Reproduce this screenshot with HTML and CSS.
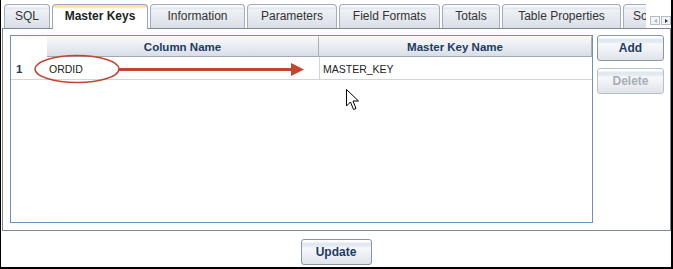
FILE: index.html
```html
<!DOCTYPE html>
<html lang="en">
<head>
  <meta charset="UTF-8" />
  <title>Master Keys</title>
  <link rel="stylesheet" href="styles.css">
</head>
<body>
  <div class="frame">
    <div class="tabbar">
      <div class="tabs">
        <div class="tab tab-sql">SQL</div>
        <div class="tab tab-keys active">Master Keys</div>
        <div class="tab tab-info">Information</div>
        <div class="tab tab-params">Parameters</div>
        <div class="tab tab-formats">Field Formats</div>
        <div class="tab tab-totals">Totals</div>
        <div class="tab tab-props">Table Properties</div>
        <div class="tab tab-more">Sort</div>
      </div>
      <div class="scroller">
        <span class="scroll-btn prev off"></span>
        <span class="scroll-btn next"></span>
      </div>
    </div>

    <div class="panel">
      <div class="grid">
        <div class="grid-head">
          <div class="cell num"></div>
          <div class="cell hd">Column Name</div>
          <div class="cell hd">Master Key Name</div>
        </div>
        <div class="grid-row">
          <div class="cell num">1</div>
          <div class="cell">ORDID</div>
          <div class="cell sep">MASTER_KEY</div>
        </div>
      </div>
      <div class="side">
        <button class="btn">Add</button>
        <button class="btn" disabled>Delete</button>
      </div>
    </div>

    <div class="footer">
      <button class="btn btn-update">Update</button>
    </div>

    <!-- annotation drawn over the grid -->
    <svg class="mark" width="673" height="120" viewBox="0 0 673 120">
      <ellipse cx="77" cy="69" rx="42" ry="13.5" fill="none" stroke="#c0462f" stroke-width="1.6" />
      <line x1="119" y1="69.5" x2="294" y2="69.5" stroke="#c0462f" stroke-width="3" />
      <polygon points="291,63 304,69.5 291,76" fill="#c0462f" />
    </svg>

    <svg class="cursor" width="14" height="22" viewBox="0 0 14 22">
      <path d="M0.5 0.5 L0.5 17 L4.5 13 L7.5 20.5 L10 19.5 L7 12 L12.5 12 Z" fill="#fff" stroke="#000" stroke-width="1" stroke-linejoin="miter" />
    </svg>
  </div>
</body>
</html>
```

FILE: styles.css
```css
body { margin: 0; background: #fff; font-family: "Liberation Sans", Arial, sans-serif; }

.frame { position: relative; width: 673px; height: 269px; box-sizing: border-box; border-left: 1px solid #000; border-right: 2px solid #000; border-bottom: 2px solid #000; padding-top: 4px; }

.tabbar { display: flex; align-items: flex-start; height: 25px; padding-left: 3px; }
.tabs { display: flex; align-items: flex-start; gap: 2px; width: 642px; height: 25px; overflow: hidden; }
.tab { flex: none; box-sizing: border-box; height: 24px; line-height: 23px; text-align: center; font-size: 12px; color: #333; border: 1px solid #a3adbb; border-bottom: none; border-radius: 4px 4px 0 0; background: linear-gradient(#f7f8fb 0, #f7f8fb 2px, #dde5ef 3px, #eef1f5 5px, #e4e8ee 60%, #d9dee6 100%); white-space: nowrap; overflow: hidden; }
.tab.active { position: relative; z-index: 2; height: 25px; font-weight: bold; color: #222; background: linear-gradient(#fbe3a0 0, #fbe3a0 2px, #fff 4px, #fff 100%); border-color: #9aa5b5; }
.tab-sql { width: 46px; }
.tab-keys { width: 96px; }
.tab-info { width: 95px; }
.tab-params { width: 90px; }
.tab-formats { width: 101px; }
.tab-totals { width: 58px; }
.tab-props { width: 119px; }
.tab-more { width: 40px; text-align: left; padding-left: 9px; }

.scroller { display: flex; gap: 1px; margin-top: 12px; margin-left: 4px; }
.scroll-btn { position: relative; box-sizing: border-box; width: 10px; height: 9px; border: 1px solid #b4bcc8; background: #f2f4f7; }
.scroll-btn::after { content: ""; position: absolute; top: 1.5px; border-top: 2.5px solid transparent; border-bottom: 2.5px solid transparent; }
.scroll-btn.prev::after { left: 2.5px; border-right: 3px solid #a8afba; }
.scroll-btn.next::after { left: 3px; border-left: 3px solid #333; }

.panel { position: relative; z-index: 1; display: flex; gap: 4px; margin: -1px 0 0 1px; width: 669px; height: 203px; box-sizing: border-box; border: 1px solid #7e8893; padding: 6px 0 0 7px; }

.grid { width: 583px; height: 188px; box-sizing: border-box; border: 1px solid #6f8fbf; font-size: 10.5px; color: #222; }
.grid-head, .grid-row { display: grid; grid-template-columns: 36px 272px 1fr; }
.grid-head { height: 21px; }
.grid-row { height: 22px; border-bottom: 1px solid #d2d5da; }
.cell { display: flex; align-items: center; padding-left: 2px; padding-top: 1px; white-space: nowrap; }
.cell.hd { justify-content: center; padding-left: 0; padding-top: 0; font-size: 11.5px; font-weight: bold; color: #1d3a63; background: linear-gradient(#f6f8fb 0, #eaeef4 45%, #d9dee6 100%); border-right: 1px solid #a8b0bc; border-bottom: 1px solid #a0a8b4; border-top: 1px solid #fff; }
.cell.num { padding-left: 5px; font-weight: bold; font-size: 11.5px; color: #1d3a63; }
.cell.sep { border-left: 1px solid #d2d5da; padding-left: 3px; }

.side { display: flex; flex-direction: column; gap: 7px; }

.btn { box-sizing: border-box; width: 67px; height: 26px; padding: 0; font-family: "Liberation Sans", Arial, sans-serif; font-size: 12px; font-weight: bold; color: #1d3a63; border: 1px solid #8a95a6; border-radius: 3px; background: linear-gradient(#fff 0, #fff 2px, #dfe7f2 3px, #e3eaf3 6px, #f7f8fb 8px, #eef0f4 60%, #dfe3ea 100%); }
.btn:disabled { color: #a7aeb8; border-color: #b8c0cc; }

.footer { display: flex; justify-content: center; padding-top: 8px; }
.btn-update { width: 71px; }

.mark { position: absolute; left: -1px; top: 0; pointer-events: none; z-index: 3; }
.cursor { position: absolute; left: 345px; top: 89px; z-index: 4; }
```
